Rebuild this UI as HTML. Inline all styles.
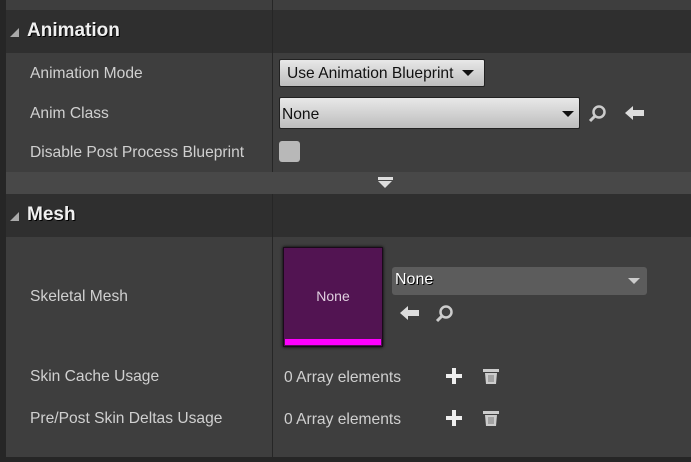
<!DOCTYPE html>
<html><head><style>
*{margin:0;padding:0;box-sizing:border-box}
body{width:691px;height:462px;background:#262626;font-family:"Liberation Sans",Arial,sans-serif;position:relative;overflow:hidden;color:#ddd}
.a{position:absolute}
.row{position:absolute;left:6px;right:0;background:#3e3e3e}
.hdr{position:absolute;left:6px;right:0;background:#2f2f2f}
.vd{position:absolute;left:272px;width:1px;background:#262626}
.lbl{position:absolute;left:30px;font-size:15.6px;color:#d0d0d0}
.h{position:absolute;left:27px;font-size:19px;font-weight:bold;color:#f0f0f0;text-shadow:1px 1px 0 #000}
.tri{position:absolute;left:10px;width:0;height:0;border-left:9px solid transparent;border-bottom:9px solid #aaa}
.btn{position:absolute;background:linear-gradient(#e8e8e8,#bdbdbd);border:1px solid #222;border-radius:2px;color:#111;font-size:15.6px}
</style></head><body>
<div class="row" style="top:0;height:10px"></div>
<div class="hdr" style="top:10px;height:43px"></div>
<div class="tri" style="top:28px"></div>
<div class="h" style="top:20px">Animation</div>
<div class="row" style="top:53px;height:119px"></div>
<div class="lbl" style="top:65px">Animation Mode</div>
<div class="lbl" style="top:105px">Anim Class</div>
<div class="lbl" style="top:144px">Disable Post Process Blueprint</div>
<div class="btn" style="left:279px;top:59px;width:206px;height:28px;padding:5px 0 0 7px">Use Animation Blueprint</div>
<div class="a" style="left:462px;top:70px;border-left:6px solid transparent;border-right:6px solid transparent;border-top:6px solid #111"></div>
<div class="btn" style="left:279px;top:97px;width:301px;height:32px;padding:8px 0 0 2px">None</div>
<div class="a" style="left:562px;top:111px;border-left:6px solid transparent;border-right:6px solid transparent;border-top:6px solid #111"></div>
<svg class="a" style="left:588px;top:103px" width="20" height="20"><circle cx="11" cy="9" r="5.5" fill="none" stroke="#ccc" stroke-width="2.5"/><path d="M7 13L2 18" stroke="#ccc" stroke-width="3"/></svg>
<svg class="a" style="left:624px;top:104px" width="22" height="18"><path d="M1 9L9 2V6H20V12H9V16Z" fill="#ddd"/></svg>
<div class="a" style="left:279px;top:141px;width:21px;height:21px;background:#b8b8b8;border-radius:3px"></div>
<div class="a" style="left:6px;top:172px;right:0;height:22px;background:#484848"></div>
<div class="a" style="left:378px;top:177px;width:15px;height:3px;background:#ddd"></div>
<div class="a" style="left:378px;top:181px;border-left:7.5px solid transparent;border-right:7.5px solid transparent;border-top:7px solid #ddd"></div>
<div class="hdr" style="top:194px;height:43px"></div>
<div class="tri" style="top:212px"></div>
<div class="h" style="top:204px">Mesh</div>
<div class="row" style="top:237px;height:220px"></div>
<div class="vd" style="top:0;height:172px"></div>
<div class="vd" style="top:194px;height:263px"></div>
<div class="lbl" style="top:288px">Skeletal Mesh</div>
<div class="lbl" style="top:368px">Skin Cache Usage</div>
<div class="lbl" style="top:410px">Pre/Post Skin Deltas Usage</div>
<div class="a" style="left:283px;top:247px;width:100px;height:100px;background:#521452;border:1px solid #1a0a1a;box-shadow:0 0 3px #000"></div>
<div class="a" style="left:285px;top:339px;width:96px;height:6px;background:#ff00ff"></div>
<div class="a" style="left:283px;top:288px;width:100px;text-align:center;font-size:14px;color:#e0cfe0">None</div>
<div class="a" style="left:392px;top:267px;width:255px;height:28px;background:#5c5c5c;border-radius:3px;font-size:16px;color:#fff;padding:4px 0 0 3px;text-shadow:1px 1px 0 #000">None</div>
<div class="a" style="left:628px;top:278px;border-left:6px solid transparent;border-right:6px solid transparent;border-top:6px solid #ccc"></div>
<svg class="a" style="left:399px;top:304px" width="22" height="18"><path d="M1 9L9 2V6H20V12H9V16Z" fill="#ddd"/></svg>
<svg class="a" style="left:435px;top:303px" width="20" height="20"><circle cx="11" cy="9" r="5.5" fill="none" stroke="#ccc" stroke-width="2.5"/><path d="M7 13L2 18" stroke="#ccc" stroke-width="3"/></svg>
<div class="a" style="left:284px;top:369px;font-size:15.6px;color:#d0d0d0">0 Array elements</div>
<div class="a" style="left:284px;top:411px;font-size:15.6px;color:#d0d0d0">0 Array elements</div>
<svg class="a" style="left:445px;top:367px" width="18" height="18"><path d="M9 1V17M1 9H17" stroke="#eee" stroke-width="4"/></svg>
<svg class="a" style="left:445px;top:409px" width="18" height="18"><path d="M9 1V17M1 9H17" stroke="#eee" stroke-width="4"/></svg>
<svg class="a" style="left:482px;top:367px" width="18" height="18"><rect x="1" y="2" width="16" height="3" fill="#ccc"/><path d="M3 6H15L14 17H4Z" fill="#ccc"/><path d="M7 8V15M9 8V15M11 8V15" stroke="#777" stroke-width="1"/></svg>
<svg class="a" style="left:482px;top:409px" width="18" height="18"><rect x="1" y="2" width="16" height="3" fill="#ccc"/><path d="M3 6H15L14 17H4Z" fill="#ccc"/><path d="M7 8V15M9 8V15M11 8V15" stroke="#777" stroke-width="1"/></svg>
</body></html>
